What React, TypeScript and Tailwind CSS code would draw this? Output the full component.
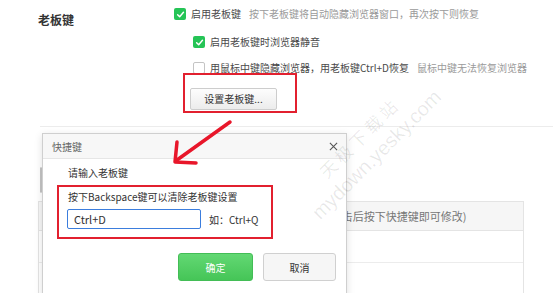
import React from 'react';

const font = "font-['Microsoft_YaHei','Noto_Sans_CJK_SC',sans-serif]";

function Check({ on }: { on: boolean }) {
  if (!on) {
    return <span className="w-[12px] h-[12px] shrink-0 rounded-[2px] border border-[#c4c4c4] bg-white" />;
  }
  return (
    <span className="w-[12px] h-[12px] shrink-0 rounded-[2px] bg-[#25c456] flex items-center justify-center">
      <svg width="9" height="9" viewBox="0 0 10 10" fill="none">
        <path d="M1.8 5.2 L4.1 7.4 L8.3 2.6" stroke="white" strokeWidth="1.6" strokeLinecap="round" strokeLinejoin="round" />
      </svg>
    </span>
  );
}

export default function App() {
  return (
    <div className={`relative w-[553px] h-[293px] overflow-hidden bg-white ${font} text-[#4a4a4a]`}>
      {/* settings section */}
      <div className="flex items-start pt-[8px]">
        <div className="w-[174px] pl-[38px] mt-[4px] text-[12px] leading-[16px] font-bold text-[#333]">老板键</div>
        <div className="flex flex-col">
          <div className="h-[12px] flex items-center gap-[5px] text-[10px] leading-[12px] whitespace-nowrap">
            <Check on />
            <span>启用老板键</span>
            <span className="ml-[3px] text-[#9a9a9a]">按下老板键将自动隐藏浏览器窗口，再次按下则恢复</span>
          </div>
          <div className="mt-[16px] pl-[19px] h-[12px] flex items-center gap-[5px] text-[10px] leading-[12px] whitespace-nowrap">
            <Check on />
            <span>启用老板键时浏览器静音</span>
          </div>
          <div className="mt-[14px] pl-[19px] h-[12px] flex items-center gap-[5px] text-[10px] leading-[12px] whitespace-nowrap">
            <Check on={false} />
            <span>用鼠标中键隐藏浏览器，用老板键Ctrl+D恢复</span>
            <span className="ml-[3px] text-[#9a9a9a]">鼠标中键无法恢复浏览器</span>
          </div>
          <div className="mt-[-1px] ml-[9px] w-[114px] h-[40px] border-2 border-[#e2202f] pt-[9px] pl-[5px]">
            <button className="w-[87px] h-[22px] border border-[#cdcdcd] rounded-[2px] bg-gradient-to-b from-[#fdfdfd] to-[#ececec] text-[10px] leading-[20px] text-[#333]">
              设置老板键...
            </button>
          </div>
        </div>
      </div>

      <div className="mt-[13px] ml-[40px] border-t border-[#ececec]" />

      {/* content behind the dialog */}
      <div className="ml-[40px] mt-[41px]">
        <Check on={false} />
      </div>
      <div className="ml-[38px] mt-[9px] w-[486px] border border-[#e4e4e4]">
        <div className="h-[29px] bg-[#f6f6f6] border-b border-[#e4e4e4] flex items-center pl-[288px] text-[11px] text-[#777] whitespace-nowrap">
          (点击后按下快捷键即可修改)
        </div>
        <div className="h-[32px] border-b border-[#ececec]" />
        <div className="h-[33px] border-b border-[#ececec]" />
        <div className="h-[32px]" />
      </div>

      {/* dialog */}
      <div className="absolute left-[42px] top-[133px] w-[305px] h-[175px] bg-white border border-[#cfcfcf] shadow-[0_2px_8px_rgba(0,0,0,0.12)]">
        <div className="h-[25px] bg-[#f7f7f7] border-b border-[#e6e6e6] flex items-center justify-between pl-[9px] pr-[8px]">
          <span className="text-[10px] text-[#666]">快捷键</span>
          <svg width="9" height="9" viewBox="0 0 10 10">
            <path d="M1 1 L9 9 M9 1 L1 9" stroke="#555" strokeWidth="1.2" />
          </svg>
        </div>
        <div className="pl-[25px] pt-[7px]">
          <div className="text-[10px] leading-[14px] text-[#333]">请输入老板键</div>
          <div className="mt-[5px] ml-[-11px] w-[216px] border-2 border-[#e2202f] pt-[3px] pl-[9px] pb-[8px]">
            <div className="text-[10px] leading-[14px] text-[#333] whitespace-nowrap">按下Backspace键可以清除老板键设置</div>
            <div className="mt-[5px] flex items-center">
              <div className="ml-[-1px] w-[134px] h-[20px] border border-[#3b7ddd] rounded-[2px] pl-[6px] flex items-center text-[11px] text-[#333]">
                Ctrl+D
              </div>
              <span className="ml-[8px] text-[10px] text-[#333] whitespace-nowrap">如：Ctrl+Q</span>
            </div>
          </div>
          <div className="mt-[14px] flex justify-end gap-[10px] pr-[10px]">
            <button className="w-[75px] h-[28px] rounded-[3px] border border-[#43bd56] bg-gradient-to-b from-[#62d873] to-[#45c557] text-white text-[10px]">
              确定
            </button>
            <button className="w-[73px] h-[28px] rounded-[3px] border border-[#d0d0d0] bg-[#f6f6f6] text-[#333] text-[10px]">
              取消
            </button>
          </div>
        </div>
      </div>

      {/* red arrow annotation */}
      <svg className="absolute left-0 top-0 pointer-events-none" width="553" height="293">
        <g stroke="#e8162a" strokeWidth="3.5" strokeLinecap="round" strokeLinejoin="round" fill="none">
          <path d="M230 122 L177 160" />
          <path d="M177 142 L175 162 L196 163" />
        </g>
      </svg>

      {/* watermark */}
      <div className="absolute left-[368px] top-[146px] -translate-x-1/2 -translate-y-1/2 -rotate-45 pointer-events-none text-center text-[rgba(0,0,0,0.09)] whitespace-nowrap">
        <div className="text-[17px] leading-[24px] tracking-[4px]">天极下载站</div>
        <div className="text-[20px] leading-[24px] font-['Liberation_Sans',sans-serif]">mydown.yesky.com</div>
      </div>
    </div>
  );
}
